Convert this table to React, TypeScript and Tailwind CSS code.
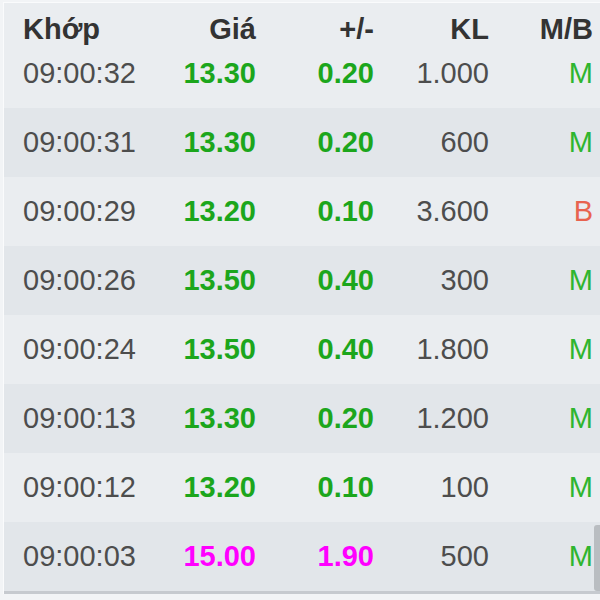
const rows = [
  { t: "09:00:32", p: "13.30", c: "0.20", kl: "1.000", mb: "M" },
  { t: "09:00:31", p: "13.30", c: "0.20", kl: "600", mb: "M" },
  { t: "09:00:29", p: "13.20", c: "0.10", kl: "3.600", mb: "B" },
  { t: "09:00:26", p: "13.50", c: "0.40", kl: "300", mb: "M" },
  { t: "09:00:24", p: "13.50", c: "0.40", kl: "1.800", mb: "M" },
  { t: "09:00:13", p: "13.30", c: "0.20", kl: "1.200", mb: "M" },
  { t: "09:00:12", p: "13.20", c: "0.10", kl: "100", mb: "M" },
  { t: "09:00:03", p: "15.00", c: "1.90", kl: "500", mb: "M", ceil: true },
];

const cols = "grid grid-cols-[140px_93px_118px_115px_104px] pl-[19px]";

export default function App() {
  return (
    <div className="w-[600px] h-[600px] bg-[#f2f4f6] overflow-hidden font-['Liberation_Sans',Arial,sans-serif] text-[29px]">
      <div className="relative ml-[3px] mt-[2px] border-l border-t border-[#fafbfc] bg-[#eaedf0]">
        {/* header */}
        <div className={`${cols} h-[36px] pt-[16px] leading-[20px] font-bold text-[#333]`}>
          <div>Khớp</div>
          <div className="text-right">Giá</div>
          <div className="text-right">+/-</div>
          <div className="text-right">KL</div>
          <div className="text-right">M/B</div>
        </div>

        {rows.map((r, i) => {
          const hl = r.ceil ? "text-[#ff00ff]" : "text-[#1ca61c]";
          return (
            <div
              key={i}
              className={`${cols} h-[69px] items-center ${i % 2 === 1 ? "bg-[#e2e6ea]" : "bg-[#eaedf0]"}`}
            >
              <div className="text-[#4d4d4d]">{r.t}</div>
              <div className={`text-right font-bold ${hl}`}>{r.p}</div>
              <div className={`text-right font-bold ${hl}`}>{r.c}</div>
              <div className="text-right text-[#4d4d4d]">{r.kl}</div>
              <div className={`text-right ${r.mb === "B" ? "text-[#e8634f]" : "text-[#2fb52f]"}`}>{r.mb}</div>
            </div>
          );
        })}

        <div className="h-[3px] bg-[#c6cacf]" />

        {/* scrollbar thumb */}
        <div className="absolute right-0 bottom-[3px] w-[6px] h-[66px] rounded-l-[3px] bg-[#b9bdc1]" />
      </div>
    </div>
  );
}
